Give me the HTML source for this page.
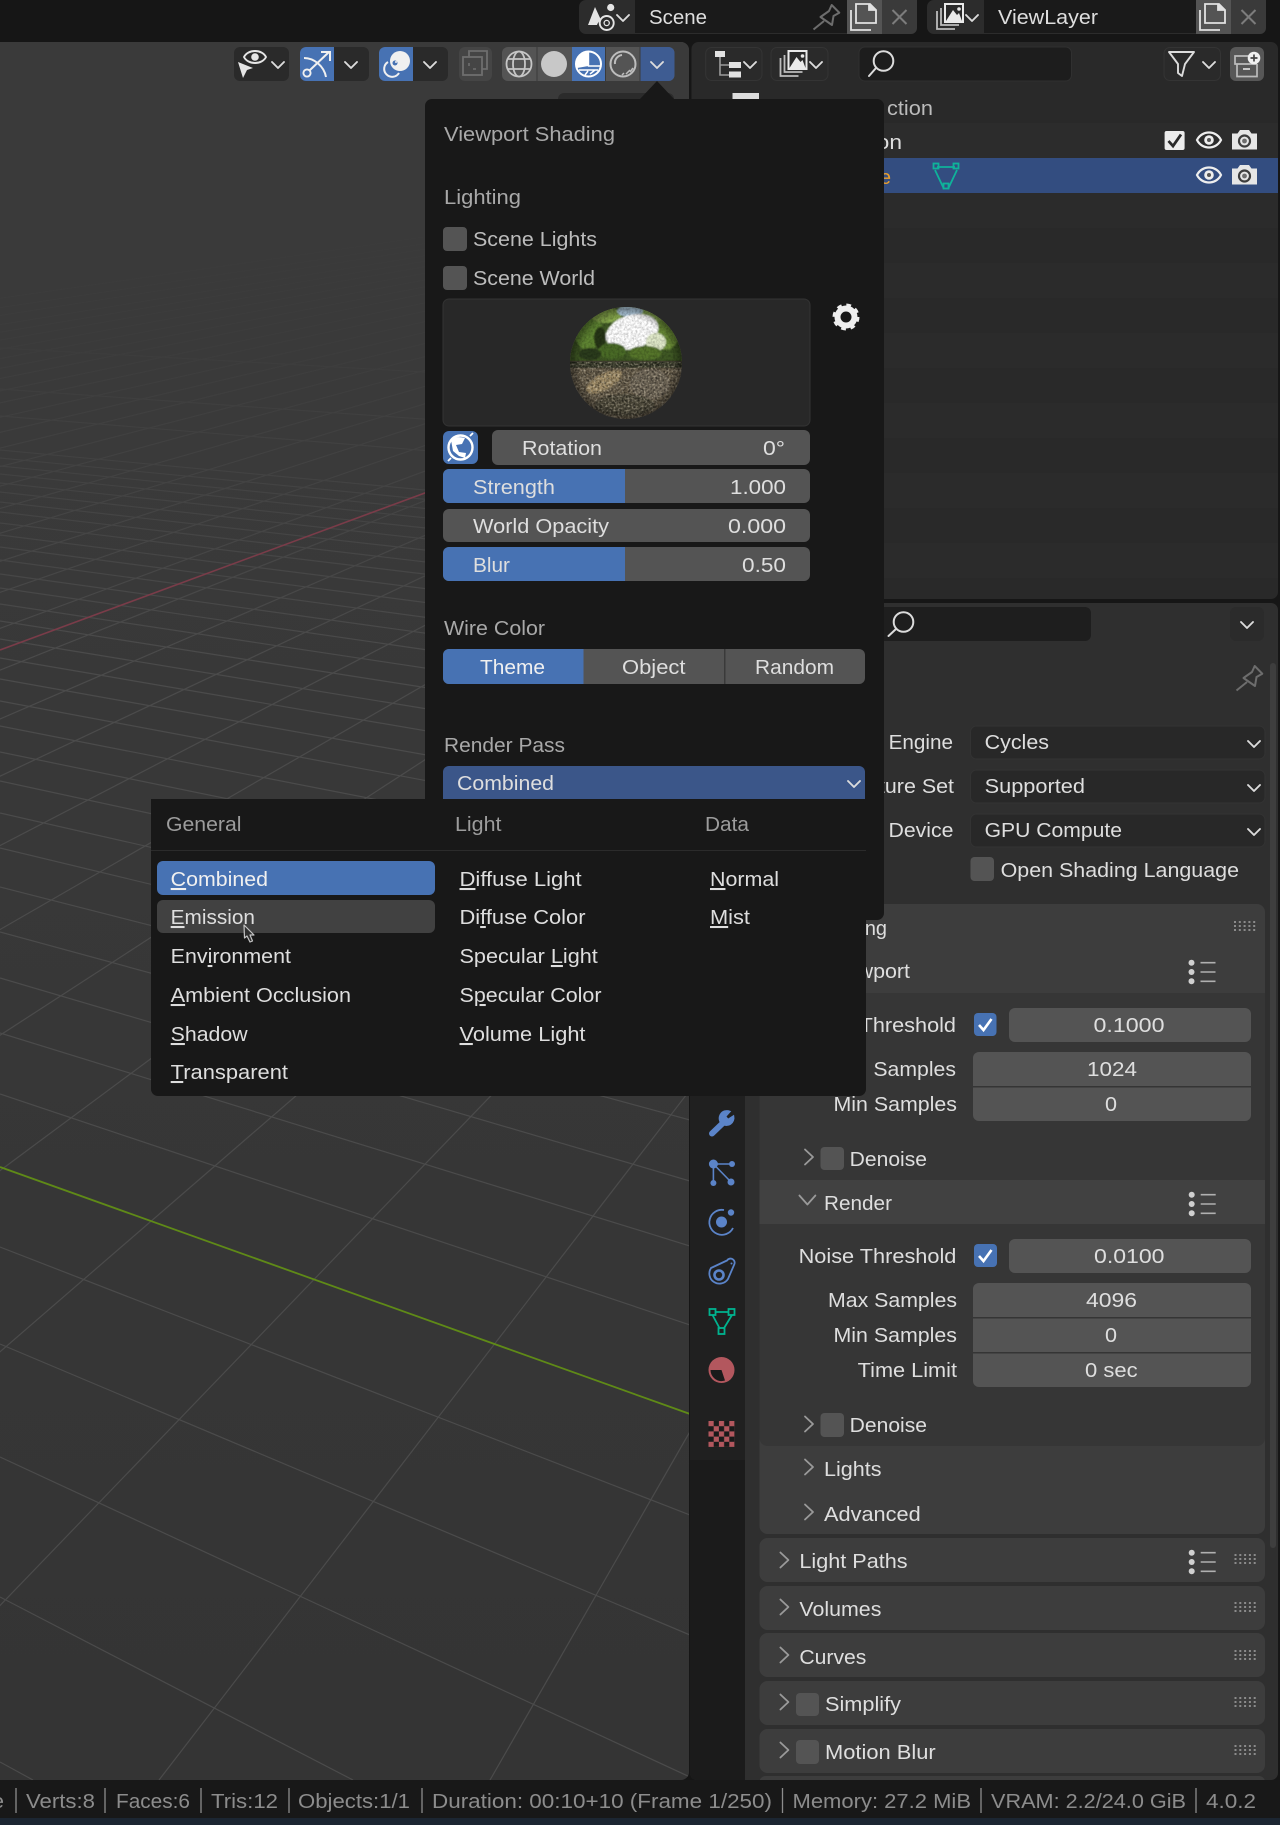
<!DOCTYPE html>
<html><head><meta charset="utf-8"><title>Blender</title>
<style>
html,body{margin:0;padding:0;background:#161616;width:1280px;height:1825px;overflow:hidden}
svg{display:block;filter:blur(.35px)}
text{font-family:"Liberation Sans",sans-serif;font-size:20.5px;fill:#dedede;white-space:pre}
.d{fill:#a8a8a8}.e{fill:#bcbcbc}.h{fill:#9c9c9c}.s{fill:#8c8c8c}.w{fill:#f0f0f0}
.u{text-decoration:underline}
</style></head><body>
<svg width="1280" height="1825" viewBox="0 0 1280 1825" xmlns="http://www.w3.org/2000/svg">
<defs>
<linearGradient id="vpbg" x1="0" y1="0" x2="0" y2="1"><stop offset="0" stop-color="#3b3b3b"/><stop offset="1" stop-color="#343434"/></linearGradient>
<linearGradient id="fade" gradientUnits="userSpaceOnUse" x1="0" y1="170" x2="0" y2="660"><stop offset="0" stop-color="#3a3a3a"/><stop offset=".35" stop-color="#3a3a3a" stop-opacity=".88"/><stop offset="1" stop-color="#3a3a3a" stop-opacity="0"/></linearGradient>
<clipPath id="vp"><rect x="-10" y="42" width="699" height="1738" rx="8"/></clipPath>
<clipPath id="ball"><circle cx="626" cy="363" r="56"/></clipPath>
<radialGradient id="rim" cx=".5" cy=".5" r=".5"><stop offset=".82" stop-color="#000" stop-opacity="0"/><stop offset="1" stop-color="#000" stop-opacity=".4"/></radialGradient>
<filter id="noise" x="0" y="0" width="1" height="1"><feTurbulence type="fractalNoise" baseFrequency=".45" numOctaves="2" seed="4"/><feColorMatrix values="0 0 0 0 0 0 0 0 0 0 0 0 0 0 0 2.4 0 0 0 -.9"/></filter>
<filter id="noisel" x="0" y="0" width="1" height="1"><feTurbulence type="fractalNoise" baseFrequency=".5" numOctaves="2" seed="11"/><feColorMatrix values="0 0 0 0 .8 0 0 0 0 .72 0 0 0 0 .55 2.6 0 0 0 -1.15"/></filter>
<filter id="sb" x="-20%" y="-20%" width="140%" height="140%"><feGaussianBlur stdDeviation=".9"/></filter>
<path id="chev" d="M-6 -3L0 3L6 -3" fill="none" stroke="#dcdcdc" stroke-width="1.9" stroke-linecap="round" stroke-linejoin="round"/>
<path id="cr" d="M-4 -7.5L4 0L-4 7.5" fill="none" stroke="#9a9a9a" stroke-width="1.8" stroke-linecap="round" stroke-linejoin="round"/>
<g id="list"><circle cx="0" cy="-9.3" r="3" fill="#d0d0d0"/><circle cx="0" cy="0" r="3" fill="#d0d0d0"/><circle cx="0" cy="9.3" r="3" fill="#d0d0d0"/><path d="M9 -9.3H24M9 0H24M9 9.3H24" stroke="#b0b0b0" stroke-width="1.6"/></g>
<g id="dots"><path d="M0 1H23M0 5H23M0 9H23" stroke="#969696" stroke-width="1.8" stroke-dasharray="2 2.8" fill="none"/></g>
<g id="eye"><path d="M-12 0C-7 -10 7 -10 12 0C7 10 -7 10 -12 0Z" fill="none" stroke="#eee" stroke-width="2.2"/><circle r="4.8" fill="#eee"/><circle r="2" fill="#555"/></g>
<g id="cam"><path d="M-12.5 -6.5H-7L-4.5 -10H4.5L7 -6.5H12.5V9.5H-12.5Z" fill="#e6e6e6"/><circle r="6.6" cy="1" fill="#3d3d3d"/><circle r="4.4" cy="1" fill="#e6e6e6"/><circle r="2.4" cy="1" fill="#6d6d6d"/></g>
<g id="copy" fill="none" stroke="#e2e2e2" stroke-width="1.8"><path d="M-13 -7V13H7"/><path d="M-8 -13H6L12 -7V6H-8Z" fill="#545454"/><path d="M5 -13V-7H12" fill="#e2e2e2"/></g>
<g id="stack"><path d="M-14 -6V12H4M-10 -9V8H8" fill="none" stroke="#bdbdbd" stroke-width="1.8"/><rect x="-6" y="-13" width="18" height="18" fill="#2a2a2a" stroke="#eaeaea" stroke-width="2"/><path d="M-5 4L2 -7L6 -2L8 -4L11 4Z" fill="#eaeaea"/><circle cx="8" cy="-8" r="1.8" fill="#eaeaea"/></g>
<g id="pin" fill="none" stroke="#6d6d6d" stroke-width="2" stroke-linejoin="round"><path d="M831.7 5L839.3 12.7L833.5 16L832 25L820.5 17L829 11Z"/><path d="M813.5 29.5L824 21"/></g>
<pattern id="chk" width="10.4" height="10.4" patternUnits="userSpaceOnUse" x="708.5" y="1421"><rect width="10.4" height="10.4" fill="#b3575e"/><rect x="5.2" width="5.2" height="5.2" fill="#1a1a1a"/><rect y="5.2" width="5.2" height="5.2" fill="#1a1a1a"/></pattern>
</defs>

<rect width="1280" height="1825" fill="#161616"/>

<!-- top bar widgets -->
<rect x="579" y="0" width="338" height="34" rx="7" fill="#2c2c2c"/>
<rect x="635" y="0" width="212" height="33" fill="#1a1a1a"/>
<rect x="847" y="0" width="35" height="34" fill="#545454"/>
<path d="M882 0H917V28a6 6 0 0 1-6 6H882Z" fill="#3a3a3a"/>
<path d="M588 25L595 7L601 20A9 9 0 0 0 597 25Z" fill="#e4e4e4"/><circle cx="606.7" cy="23" r="7" fill="#2c2c2c" stroke="#e4e4e4" stroke-width="1.9"/><circle cx="606.7" cy="23" r="2.6" fill="none" stroke="#e4e4e4" stroke-width="1.3"/><circle cx="610.7" cy="7.5" r="3.6" fill="#e4e4e4"/>
<use href="#chev" x="623" y="18"/>
<text x="649" y="24" textLength="58" lengthAdjust="spacingAndGlyphs">Scene</text>
<use href="#pin"/>
<use href="#copy" x="864" y="17"/>
<path d="M892.5 10L906.5 24M906.5 10L892.5 24" stroke="#7c7c7c" stroke-width="2"/>

<rect x="927" y="0" width="339" height="34" rx="7" fill="#2c2c2c"/>
<rect x="984" y="0" width="212" height="33" fill="#1a1a1a"/>
<rect x="1196" y="0" width="35" height="34" fill="#545454"/>
<path d="M1231 0H1266V28a6 6 0 0 1-6 6H1231Z" fill="#3a3a3a"/>
<use href="#stack" x="951" y="17"/>
<use href="#chev" x="972" y="18"/>
<text x="998" y="24" textLength="100" lengthAdjust="spacingAndGlyphs">ViewLayer</text>
<use href="#copy" x="1213" y="17"/>
<path d="M1241.5 10L1255.5 24M1255.5 10L1241.5 24" stroke="#7c7c7c" stroke-width="2"/>

<!-- viewport -->
<g clip-path="url(#vp)">
<rect x="-10" y="42" width="699" height="1738" fill="url(#vpbg)"/>
<g fill="none" stroke="#4b4b4b" stroke-width="1.2">
<path d="M0 1762L33 1780M0 1597L353 1780M0 1457L690 1777M0 1344L690 1635M0 1247L690 1515M0 1094L690 1325M0 1033L690 1246M0 978L690 1181M0 932L690 1120M0 887L690 1063M0 848L690 1014M0 813L690 970M0 781L690 930M0 752L690 894M0 726L690 861M0 701L690 830M0 679L690 802M0 658L690 776M0 639L690 752M0 621L690 729M0 604L690 708M0 588L690 688M0 574L690 670M0 560L690 653M0 547L690 637M0 535L690 622M0 523L690 606M0 512L690 593M0 502L690 580M0 492L690 568M0 483L690 556M0 474L690 545M0 466L690 535M0 458L690 525M0 450L690 515M0 416L690 472M0 389L690 438M0 348L690 387"/>
<path d="M490 1780L690 1431.5M159 1780L690 1090M-168 1780L690 889M-495 1780L690 755M-822 1780L690 659M-1149 1780L690 588M-1476 1780L690 532M-1803 1780L690 488M-2130 1780L690 451M-2457 1780L690 421M-2784 1780L690 395M-3111 1780L690 373M-3438 1780L690 354M-3765 1780L690 338M-4092 1780L690 323M-4419 1780L690 310M-4746 1780L690 298M-5073 1780L690 288M-5400 1780L690 278M-5727 1780L690 270M-6054 1780L690 262M-6381 1780L690 254M-6708 1780L690 248M-7035 1780L690 241M-7362 1780L690 236M-7689 1780L690 231M-8016 1780L690 226M-8343 1780L690 221M-8670 1780L690 217M-9000 1780L690 213M-9400 1780L690 208M-9800 1780L690 204M-10300 1780L690 199"/>
</g>
<rect x="0" y="42" width="690" height="620" fill="url(#fade)"/>
<path d="M0 650L690 395" stroke="#7a3c49" stroke-width="1.6" fill="none"/>
<path d="M0 1167L690 1414" stroke="#5f8a17" stroke-width="1.8" fill="none"/>
</g>

<!-- viewport header widgets -->
<rect x="234" y="47" width="55" height="34" rx="6" fill="#2a2a2a"/>
<path d="M238 62L253 68L247 70L243 78Z" fill="#e6e6e6"/>
<path d="M244 57C248 49 262 49 266 57C262 65 248 65 244 57Z" fill="none" stroke="#e6e6e6" stroke-width="1.9"/><circle cx="255" cy="57" r="3.8" fill="#e6e6e6"/>
<use href="#chev" x="278" y="65"/>
<rect x="300" y="47" width="69" height="34" rx="6" fill="#2a2a2a"/>
<rect x="300" y="47" width="34" height="34" rx="6" fill="#4772b3"/><rect x="320" y="47" width="14" height="34" fill="#4772b3"/>
<path d="M304 58C314 58 324 66 326 77" fill="none" stroke="#f0f0f0" stroke-width="2"/><path d="M310 70L329 52M321 52H330V61" fill="none" stroke="#f0f0f0" stroke-width="2"/><circle cx="307" cy="73" r="3.6" fill="#4772b3" stroke="#f0f0f0" stroke-width="1.9"/>
<use href="#chev" x="351" y="65"/>
<rect x="379" y="47" width="69" height="34" rx="6" fill="#2a2a2a"/>
<rect x="379" y="47" width="34" height="34" rx="6" fill="#4772b3"/><rect x="399" y="47" width="14" height="34" fill="#4772b3"/>
<path d="M388 62A8 8 0 1 0 399 73" fill="none" stroke="#f0f0f0" stroke-width="2"/><circle cx="400" cy="61" r="10" fill="#f0f0f0"/><circle cx="395" cy="63" r="2.5" fill="#4772b3"/><circle cx="396" cy="62" r="1" fill="#f0f0f0"/>
<use href="#chev" x="430" y="65"/>
<rect x="459" y="47" width="33" height="34" rx="6" fill="#454545"/>
<path d="M469 57V51H487V69H482" fill="none" stroke="#6e6e6e" stroke-width="1.8"/><rect x="463" y="57" width="19" height="18" fill="none" stroke="#6e6e6e" stroke-width="1.8"/><path d="M469 63V66M476 69H473" stroke="#6e6e6e" stroke-width="1.6"/>

<rect x="502" y="47" width="172.5" height="34" rx="6" fill="#545454"/>
<rect x="572" y="47" width="33.5" height="34" fill="#4772b3"/>
<path d="M640 47H668.5a6 6 0 0 1 6 6V75a6 6 0 0 1-6 6H640Z" fill="#3e5c92"/>
<path d="M537 47V81M605.5 47V81M640 47V81" stroke="#3a3a3a" stroke-width="1"/>
<g fill="none" stroke="#c6c6c6" stroke-width="1.8"><circle cx="519" cy="64" r="12.5"/><ellipse cx="519" cy="64" rx="6" ry="12.5"/><path d="M507 59H531M507 69H531"/></g>
<circle cx="554" cy="64" r="13" fill="#c8c8c8"/>
<circle cx="588.5" cy="64" r="12.5" fill="none" stroke="#fff" stroke-width="2"/><path d="M588.5 52A12 12 0 0 0 577 68L588.5 66Z" fill="#fff"/><path d="M579 70L598 70M590 74L595 70M585 75L588 71" stroke="#fff" stroke-width="1.5"/>
<path d="M588.5 52V66L600.5 66" stroke="#fff" stroke-width="1.4" fill="none"/>
<circle cx="623" cy="64" r="12.5" fill="none" stroke="#bdbdbd" stroke-width="2"/><path d="M615 64A8 8 0 0 1 622 55" fill="none" stroke="#bdbdbd" stroke-width="2"/><path d="M626 74L630 70M622 75L624 73M630 72L633 68" stroke="#bdbdbd" stroke-width="1.5"/>
<use href="#chev" x="657" y="65"/>
<rect x="558" y="93" width="116" height="30" rx="6" fill="#2b2b2b"/>

<!-- outliner -->
<rect x="691.5" y="42" width="586.5" height="557" rx="7" fill="#292929"/>
<rect x="692" y="123" width="586" height="35" fill="#2c2c2c"/>
<rect x="692" y="193" width="586" height="35" fill="#2b2b2b"/>
<rect x="692" y="263" width="586" height="35" fill="#2b2b2b"/>
<rect x="692" y="333" width="586" height="35" fill="#2b2b2b"/>
<rect x="692" y="403" width="586" height="35" fill="#2b2b2b"/>
<rect x="692" y="473" width="586" height="35" fill="#2b2b2b"/>
<rect x="692" y="543" width="586" height="35" fill="#2b2b2b"/>
<rect x="692" y="158" width="586" height="35" fill="#334d80"/>
<rect x="732.5" y="93" width="26.5" height="10" fill="#dcdcdc"/>
<rect x="705.7" y="47.5" width="56.3" height="33" rx="6" fill="#2a2a2a" stroke="#343434"/>
<rect x="715" y="51" width="10" height="6" fill="#e2e2e2"/><path d="M720 57V75H729M720 65H729" fill="none" stroke="#9a9a9a" stroke-width="1.6"/><rect x="729" y="62" width="12" height="6" fill="#e2e2e2"/><rect x="729" y="71.5" width="12" height="6" fill="#e2e2e2"/>
<use href="#chev" x="750" y="65"/>
<rect x="771" y="47.5" width="57" height="33" rx="6" fill="#2a2a2a" stroke="#343434"/>
<use href="#stack" x="794.5" y="64"/>
<use href="#chev" x="816" y="65"/>
<rect x="859" y="47" width="212.5" height="34" rx="6" fill="#1d1d1d" stroke="#303030"/>
<circle cx="883.5" cy="61" r="9.8" fill="none" stroke="#dcdcdc" stroke-width="2"/><path d="M876 68L869 76" stroke="#dcdcdc" stroke-width="2" stroke-linecap="round"/>
<rect x="1164" y="47.5" width="56.5" height="33" rx="6" fill="#2a2a2a" stroke="#343434"/>
<path d="M1169 52H1194L1185 64L1182 76L1178 73L1178 64Z" fill="none" stroke="#dcdcdc" stroke-width="1.9" stroke-linejoin="round"/>
<use href="#chev" x="1209" y="65"/>
<rect x="1230" y="47" width="34" height="34" rx="6" fill="#575757"/>
<path d="M1249 56H1235V64H1257M1237 64V76.5H1257V64" fill="none" stroke="#bcbcbc" stroke-width="1.7"/><rect x="1243" y="68" width="7" height="2" fill="#c8c8c8"/>
<circle cx="1254" cy="58" r="6.3" fill="#f0f0f0"/><path d="M1250.5 58H1257.5M1254 54.5V61.5" stroke="#444" stroke-width="1.7"/>
<text x="887" y="115" textLength="46" lengthAdjust="spacingAndGlyphs" class="e">ction</text>
<text x="802" y="149" textLength="100" lengthAdjust="spacingAndGlyphs">Collection</text>
<text x="843" y="184" textLength="48" lengthAdjust="spacingAndGlyphs" style="fill:#e89d2c">Cube</text>
<rect x="1164.6" y="131" width="20" height="19" rx="2" fill="#ececec"/><path d="M1168.5 141L1173 146L1181 134.5" fill="none" stroke="#282828" stroke-width="2.8"/>
<use href="#eye" x="1209" y="140"/><use href="#cam" x="1244.5" y="140"/>
<use href="#eye" x="1209" y="175"/><use href="#cam" x="1244.5" y="175"/>
<g fill="none" stroke="#0fb39a" stroke-width="1.8"><path d="M937 167L955 167M935 170L944 189M957 170L948 189"/><rect x="933.5" y="163.5" width="5" height="5"/><rect x="953.5" y="163.5" width="5" height="5"/><rect x="943.5" y="183.5" width="5" height="5"/></g>

<!-- properties -->
<rect x="690" y="603" width="588" height="1177" rx="7" fill="#2f2f2f"/>
<path d="M690 650H745V1780H697a7 7 0 0 1-7-7Z" fill="#1b1b1b"/>
<rect x="690" y="650" width="55" height="810" fill="#202020"/>
<rect x="840" y="607" width="251" height="34" rx="6" fill="#1e1e1e"/>
<circle cx="903.5" cy="622" r="9.8" fill="none" stroke="#dcdcdc" stroke-width="2"/><path d="M896 629L888.5 636" stroke="#dcdcdc" stroke-width="2" stroke-linecap="round"/>
<rect x="1230" y="607" width="34" height="34" rx="6" fill="#2b2b2b"/><use href="#chev" x="1247" y="625"/>
<use href="#pin" transform="translate(423 661)"/>

<text x="815" y="749" textLength="138" lengthAdjust="spacingAndGlyphs">Render Engine</text>
<text x="842" y="793" textLength="112" lengthAdjust="spacingAndGlyphs">Feature Set</text>
<text x="888.5" y="837" textLength="65" lengthAdjust="spacingAndGlyphs">Device</text>
<rect x="970.5" y="726" width="294.5" height="33" rx="6" fill="#282828" stroke="#333"/>
<rect x="970.5" y="770" width="294.5" height="33" rx="6" fill="#282828" stroke="#333"/>
<rect x="970.5" y="814" width="294.5" height="33" rx="6" fill="#282828" stroke="#333"/>
<text x="984.6" y="749" textLength="64.4" lengthAdjust="spacingAndGlyphs">Cycles</text>
<text x="984.6" y="793" textLength="100.4" lengthAdjust="spacingAndGlyphs">Supported</text>
<text x="984.6" y="837" textLength="137.4" lengthAdjust="spacingAndGlyphs">GPU Compute</text>
<use href="#chev" x="1254" y="744"/><use href="#chev" x="1254" y="788"/><use href="#chev" x="1254" y="832"/>
<rect x="970.5" y="857" width="23.5" height="24" rx="4" fill="#545454"/>
<text x="1000.6" y="877" textLength="238.4" lengthAdjust="spacingAndGlyphs">Open Shading Language</text>

<!-- Sampling panel -->
<rect x="759.5" y="904" width="505.5" height="630" rx="8" fill="#3d3d3d"/>
<rect x="759.5" y="993" width="505.5" height="187" fill="#363636"/>
<rect x="759.5" y="1180" width="505.5" height="44" fill="#414141"/>
<rect x="759.5" y="1224" width="505.5" height="214" fill="#363636"/>
<path d="M759.5 1438H1265V1438a8 8 0 0 1-8 8H767.5a8 8 0 0 1-8-8Z" fill="#363636"/>
<text x="804" y="935" textLength="83" lengthAdjust="spacingAndGlyphs">Sampling</text>
<use href="#dots" x="1234" y="921"/>
<text x="827" y="978" textLength="83" lengthAdjust="spacingAndGlyphs">Viewport</text>
<use href="#list" x="1191.5" y="972"/>
<text x="798.6" y="1032" textLength="157.4" lengthAdjust="spacingAndGlyphs">Noise Threshold</text>
<rect x="974" y="1013" width="22.5" height="23" rx="4" fill="#4772b3"/><path d="M979 1025L983.5 1030L991.5 1019" fill="none" stroke="#fff" stroke-width="2.6"/>
<rect x="1009" y="1008" width="242" height="34" rx="6" fill="#545454"/>
<text x="1093.5" y="1032" textLength="71" lengthAdjust="spacingAndGlyphs">0.1000</text>
<rect x="973" y="1052" width="278" height="69" rx="6" fill="#545454"/><rect x="973" y="1086" width="278" height="1.5" fill="#353535"/>
<text x="873.4" y="1076" textLength="82.6" lengthAdjust="spacingAndGlyphs">Samples</text>
<text x="1087" y="1076" textLength="50" lengthAdjust="spacingAndGlyphs">1024</text>
<text x="833.5" y="1111" textLength="123.5" lengthAdjust="spacingAndGlyphs">Min Samples</text>
<text x="1105" y="1111" textLength="12" lengthAdjust="spacingAndGlyphs">0</text>
<use href="#cr" x="809" y="1157"/>
<rect x="820.5" y="1147" width="23.5" height="23" rx="4" fill="#545454"/>
<text x="849.7" y="1166" textLength="77.3" lengthAdjust="spacingAndGlyphs">Denoise</text>

<path d="M799.4 1195.5L807.4 1204.5L815.4 1195.5" fill="none" stroke="#9a9a9a" stroke-width="1.8" stroke-linecap="round" stroke-linejoin="round"/>
<text x="824" y="1210" textLength="68" lengthAdjust="spacingAndGlyphs">Render</text>
<use href="#list" x="1191.7" y="1204"/>
<text x="798.6" y="1263" textLength="157.8" lengthAdjust="spacingAndGlyphs">Noise Threshold</text>
<rect x="974" y="1244" width="23" height="23" rx="4" fill="#4772b3"/><path d="M979 1256L983.5 1261L991.5 1250" fill="none" stroke="#fff" stroke-width="2.6"/>
<rect x="1009" y="1239" width="242" height="34" rx="6" fill="#545454"/>
<text x="1094" y="1263" textLength="70.5" lengthAdjust="spacingAndGlyphs">0.0100</text>
<rect x="973" y="1283" width="278" height="104" rx="6" fill="#545454"/><rect x="973" y="1317" width="278" height="1.5" fill="#353535"/><rect x="973" y="1352" width="278" height="1.5" fill="#353535"/>
<text x="828" y="1307" textLength="129" lengthAdjust="spacingAndGlyphs">Max Samples</text>
<text x="1086" y="1307" textLength="51" lengthAdjust="spacingAndGlyphs">4096</text>
<text x="833.5" y="1342" textLength="123.5" lengthAdjust="spacingAndGlyphs">Min Samples</text>
<text x="1105" y="1342" textLength="12" lengthAdjust="spacingAndGlyphs">0</text>
<text x="857.7" y="1377" textLength="99.3" lengthAdjust="spacingAndGlyphs">Time Limit</text>
<text x="1085" y="1377" textLength="52.6" lengthAdjust="spacingAndGlyphs">0 sec</text>
<use href="#cr" x="809" y="1424"/>
<rect x="820.5" y="1413" width="23.5" height="24" rx="4" fill="#545454"/>
<text x="849.7" y="1432" textLength="77.3" lengthAdjust="spacingAndGlyphs">Denoise</text>
<use href="#cr" x="809" y="1467"/>
<text x="824" y="1476" textLength="57.5" lengthAdjust="spacingAndGlyphs">Lights</text>
<use href="#cr" x="809" y="1512"/>
<text x="824" y="1521" textLength="96.7" lengthAdjust="spacingAndGlyphs">Advanced</text>

<!-- closed panels -->
<rect x="759.5" y="1538" width="505.5" height="44" rx="8" fill="#3d3d3d"/>
<use href="#cr" x="784.4" y="1560"/>
<text x="799.4" y="1568" textLength="108.2" lengthAdjust="spacingAndGlyphs">Light Paths</text>
<use href="#list" x="1191.7" y="1562"/><use href="#dots" x="1234.5" y="1554"/>
<rect x="759.5" y="1586" width="505.5" height="44" rx="8" fill="#3d3d3d"/>
<use href="#cr" x="784.4" y="1607"/>
<text x="799.4" y="1616" textLength="82" lengthAdjust="spacingAndGlyphs">Volumes</text>
<use href="#dots" x="1234.5" y="1602"/>
<rect x="759.5" y="1633" width="505.5" height="44" rx="8" fill="#3d3d3d"/>
<use href="#cr" x="784.4" y="1655"/>
<text x="799.4" y="1664" textLength="67" lengthAdjust="spacingAndGlyphs">Curves</text>
<use href="#dots" x="1234.5" y="1650"/>
<rect x="759.5" y="1681" width="505.5" height="44" rx="8" fill="#3d3d3d"/>
<use href="#cr" x="784.4" y="1702"/>
<rect x="796" y="1693" width="23" height="23" rx="4" fill="#545454"/>
<text x="825" y="1711" textLength="76" lengthAdjust="spacingAndGlyphs">Simplify</text>
<use href="#dots" x="1234.5" y="1697"/>
<rect x="759.5" y="1729" width="505.5" height="44" rx="8" fill="#3d3d3d"/>
<use href="#cr" x="784.4" y="1750"/>
<rect x="796" y="1740" width="23" height="24" rx="4" fill="#545454"/>
<text x="825" y="1759" textLength="110.7" lengthAdjust="spacingAndGlyphs">Motion Blur</text>
<use href="#dots" x="1234.5" y="1745"/>
<path d="M759.5 1784v-2a6 6 0 0 1 6-6H1259a6 6 0 0 1 6 6v2Z" fill="#3d3d3d"/>
<!-- scrollbar -->
<rect x="1270" y="663" width="6" height="885" rx="3" fill="#3e3e3e"/>

<!-- nav icons -->
<g fill="none" stroke="#5b84c9">
<path d="M712 1133.5L724 1122" stroke-width="6" stroke-linecap="round"/>
<path d="M733.5 1116A7.5 7.5 0 0 1 722 1124A7.5 7.5 0 0 1 730 1111.5L725.5 1116.5L728 1119.5Z" fill="#5b84c9" stroke-width="1.5"/>
<path d="M713.4 1164L713.4 1183M713.4 1164H732M713.4 1164L731 1182" stroke-width="1.6"/>
<circle cx="713.4" cy="1164" r="4.5" fill="#5b84c9" stroke="none"/><circle cx="732" cy="1164" r="3" fill="#5b84c9" stroke="none"/><circle cx="713.4" cy="1183" r="3" fill="#5b84c9" stroke="none"/><circle cx="731" cy="1182" r="3.5" fill="#5b84c9" stroke="none"/>
<circle cx="721.5" cy="1222" r="5.5" fill="#5b84c9" stroke="none"/><circle cx="731" cy="1212.5" r="3.2" fill="#5b84c9" stroke="none"/>
<path d="M724 1210A12.5 12.5 0 1 0 733 1228" stroke-width="1.8"/>
<path d="M711 1268L727 1260.5A4 4 0 0 1 734 1265L728 1279A10 10 0 1 1 711 1268Z" stroke-width="1.8"/>
<circle cx="719" cy="1275" r="4.5" stroke-width="2.6"/><circle cx="731.5" cy="1263.5" r="1" fill="#5b84c9" stroke="none"/>
</g>
<g fill="none" stroke="#00b38f" stroke-width="1.8"><path d="M715.5 1312H729M712.5 1315L720 1329M732 1315L723.5 1329"/><rect x="709.5" y="1309" width="6" height="6"/><rect x="728.5" y="1309" width="6" height="6"/><rect x="718.5" y="1328" width="6" height="6"/></g>
<circle cx="721.5" cy="1370" r="13" fill="#b3575e"/><path d="M721.5 1370H710.5A11 11 0 0 0 725 1380.5Z" fill="#1a1a1a"/>
<rect x="708.5" y="1421" width="26" height="26" fill="url(#chk)"/>

<!-- Viewport Shading popover -->
<polygon points="640,99 657,81 674,99" fill="#181818"/>
<rect x="425" y="99" width="459" height="821" rx="7" fill="#181818"/>
<text x="444" y="141" textLength="171" lengthAdjust="spacingAndGlyphs" class="d">Viewport Shading</text>
<text x="444" y="204" textLength="77" lengthAdjust="spacingAndGlyphs" class="d">Lighting</text>
<rect x="443" y="227" width="24" height="24" rx="4" fill="#545454"/>
<text x="473" y="246" textLength="124" lengthAdjust="spacingAndGlyphs" class="e">Scene Lights</text>
<rect x="443" y="266" width="24" height="24" rx="4" fill="#545454"/>
<text x="473" y="285" textLength="122" lengthAdjust="spacingAndGlyphs" class="e">Scene World</text>
<rect x="443" y="299" width="367" height="127" rx="6" fill="#282828" stroke="#333"/>
<g clip-path="url(#ball)">
<rect x="566" y="303" width="120" height="120" fill="#645a48"/>
<rect x="566" y="303" width="120" height="58" fill="#3f5824"/>
<g filter="url(#sb)">
<ellipse cx="588" cy="330" rx="14" ry="20" fill="#5f8530"/>
<ellipse cx="666" cy="330" rx="14" ry="20" fill="#6e9138"/>
<ellipse cx="606" cy="315" rx="16" ry="8" fill="#86a74c"/>
<ellipse cx="652" cy="314" rx="14" ry="8" fill="#8eae54"/>
<ellipse cx="630" cy="311" rx="13" ry="6" fill="#b5d0e4"/>
<ellipse cx="632" cy="332" rx="27" ry="17" fill="#fff" transform="rotate(-16 632 332)"/>
<ellipse cx="656" cy="342" rx="10" ry="9" fill="#dfe8c8"/>
<ellipse cx="600" cy="338" rx="6" ry="11" fill="#263417"/>
<ellipse cx="612" cy="351" rx="14" ry="8" fill="#4a6a26"/>
<ellipse cx="645" cy="353" rx="17" ry="7" fill="#55752c"/>
<ellipse cx="590" cy="354" rx="11" ry="6" fill="#2b3a1a"/>
<rect x="566" y="361" width="120" height="7" fill="#383a2c"/>
<ellipse cx="604" cy="382" rx="20" ry="8" fill="#a08c66" transform="rotate(-28 604 382)"/>
<ellipse cx="650" cy="384" rx="20" ry="15" fill="#6e6556"/>
<ellipse cx="625" cy="405" rx="30" ry="11" fill="#4c4638"/>
</g>
<rect x="566" y="362" width="120" height="61" filter="url(#noise)" opacity=".55"/>
<rect x="566" y="362" width="120" height="61" filter="url(#noisel)" opacity=".5"/>
<rect x="566" y="303" width="120" height="60" filter="url(#noise)" opacity=".22"/>
<circle cx="626" cy="363" r="56" fill="url(#rim)"/>
</g>
<!-- gear -->
<circle cx="846" cy="317" r="8.5" fill="none" stroke="#eee" stroke-width="6"/>
<circle cx="846" cy="317" r="11.5" fill="none" stroke="#eee" stroke-width="4" stroke-dasharray="4.5 4.53"/>
<!-- world btn -->
<rect x="443" y="431" width="35" height="33" rx="6" fill="#4772b3"/>
<circle cx="460.5" cy="447.5" r="12" fill="none" stroke="#fff" stroke-width="2.4"/>
<path d="M451 440C455 436 461 437 465 438L462 444L456 445L459 452L466 453L465 458L459 456L453 451Z" fill="#fff"/>
<path d="M448 461L451 458M470 436L473 433" stroke="#fff" stroke-width="1.8"/>
<rect x="492" y="430" width="318" height="35" rx="6" fill="#545454"/>
<text x="522" y="455" textLength="80" lengthAdjust="spacingAndGlyphs">Rotation</text>
<text x="763" y="455" textLength="22" lengthAdjust="spacingAndGlyphs">0°</text>
<rect x="443" y="469" width="367" height="34" rx="6" fill="#545454"/>
<path d="M625 469H449a6 6 0 0 0-6 6V497a6 6 0 0 0 6 6H625Z" fill="#4772b3"/>
<text x="473" y="494" textLength="82" lengthAdjust="spacingAndGlyphs">Strength</text>
<text x="730" y="494" textLength="56" lengthAdjust="spacingAndGlyphs">1.000</text>
<rect x="443" y="509" width="367" height="33" rx="6" fill="#545454"/>
<text x="473" y="533" textLength="136" lengthAdjust="spacingAndGlyphs">World Opacity</text>
<text x="728" y="533" textLength="58" lengthAdjust="spacingAndGlyphs">0.000</text>
<rect x="443" y="547" width="367" height="34" rx="6" fill="#545454"/>
<path d="M625 547H449a6 6 0 0 0-6 6V575a6 6 0 0 0 6 6H625Z" fill="#4772b3"/>
<text x="473" y="572" textLength="37" lengthAdjust="spacingAndGlyphs">Blur</text>
<text x="742" y="572" textLength="44" lengthAdjust="spacingAndGlyphs">0.50</text>
<text x="444" y="635" textLength="101" lengthAdjust="spacingAndGlyphs" class="d">Wire Color</text>
<rect x="443" y="649" width="422" height="35" rx="6" fill="#545454"/>
<path d="M583.5 649H449a6 6 0 0 0-6 6V678a6 6 0 0 0 6 6H583.5Z" fill="#4772b3"/>
<rect x="724" y="649" width="1.5" height="35" fill="#3a3a3a"/>
<text x="480" y="674" textLength="65" lengthAdjust="spacingAndGlyphs" class="w">Theme</text>
<text x="622" y="674" textLength="63.5" lengthAdjust="spacingAndGlyphs">Object</text>
<text x="755" y="674" textLength="79" lengthAdjust="spacingAndGlyphs">Random</text>
<text x="444" y="752" textLength="121" lengthAdjust="spacingAndGlyphs" class="d">Render Pass</text>
<path d="M443 800V772a6 6 0 0 1 6-6H859a6 6 0 0 1 6 6V800Z" fill="#3b5689"/>
<text x="457" y="790" textLength="97" lengthAdjust="spacingAndGlyphs">Combined</text>
<use href="#chev" x="854" y="784"/>

<!-- enum menu -->
<path d="M151 799H866V1089a7 7 0 0 1-7 7H158a7 7 0 0 1-7-7Z" fill="#181818"/>
<text x="166" y="831" textLength="75.5" lengthAdjust="spacingAndGlyphs" class="h">General</text>
<text x="455" y="831" textLength="46.5" lengthAdjust="spacingAndGlyphs" class="h">Light</text>
<text x="705" y="831" textLength="44" lengthAdjust="spacingAndGlyphs" class="h">Data</text>
<rect x="151" y="850" width="715" height="1" fill="#2b2b2b"/>
<rect x="157" y="861" width="278" height="34" rx="6" fill="#4772b3"/>
<rect x="157" y="900" width="278" height="33" rx="6" fill="#414141"/>
<text x="170.7" y="886" textLength="97.3" lengthAdjust="spacingAndGlyphs" class="w"><tspan class="u">C</tspan>ombined</text>
<text x="170.7" y="924" textLength="84.3" lengthAdjust="spacingAndGlyphs"><tspan class="u">E</tspan>mission</text>
<text x="170.7" y="963" textLength="120.3" lengthAdjust="spacingAndGlyphs">Env<tspan class="u">i</tspan>ronment</text>
<text x="170.7" y="1002" textLength="180.3" lengthAdjust="spacingAndGlyphs"><tspan class="u">A</tspan>mbient Occlusion</text>
<text x="170.7" y="1041" textLength="76.9" lengthAdjust="spacingAndGlyphs"><tspan class="u">S</tspan>hadow</text>
<text x="170.7" y="1079" textLength="117.3" lengthAdjust="spacingAndGlyphs"><tspan class="u">T</tspan>ransparent</text>
<text x="459.5" y="886" textLength="122.2" lengthAdjust="spacingAndGlyphs"><tspan class="u">D</tspan>iffuse Light</text>
<text x="459.5" y="924" textLength="126" lengthAdjust="spacingAndGlyphs">Di<tspan class="u">f</tspan>fuse Color</text>
<text x="459.5" y="963" textLength="138.3" lengthAdjust="spacingAndGlyphs">Specular <tspan class="u">L</tspan>ight</text>
<text x="459.5" y="1002" textLength="142" lengthAdjust="spacingAndGlyphs">S<tspan class="u">p</tspan>ecular Color</text>
<text x="459.5" y="1041" textLength="126" lengthAdjust="spacingAndGlyphs"><tspan class="u">V</tspan>olume Light</text>
<text x="710" y="886" textLength="69" lengthAdjust="spacingAndGlyphs"><tspan class="u">N</tspan>ormal</text>
<text x="710" y="924" textLength="40" lengthAdjust="spacingAndGlyphs"><tspan class="u">M</tspan>ist</text>
<path d="M244 925L244.5 938L247 936L250 942L252.5 941L250 935L254 935Z" fill="#2e2e2e" stroke="#c4c4c4" stroke-width="1.2" stroke-linejoin="round"/>

<!-- status bar -->
<rect x="0" y="1780" width="1280" height="38" fill="#181818"/>
<rect x="0" y="1818" width="1280" height="7" fill="#1c2632"/>
<g>
<text x="-8" y="1808" textLength="12" lengthAdjust="spacingAndGlyphs" class="s">e</text>
<text x="26" y="1808" textLength="69" lengthAdjust="spacingAndGlyphs" class="s">Verts:8</text>
<text x="116" y="1808" textLength="74" lengthAdjust="spacingAndGlyphs" class="s">Faces:6</text>
<text x="211" y="1808" textLength="67" lengthAdjust="spacingAndGlyphs" class="s">Tris:12</text>
<text x="298" y="1808" textLength="112" lengthAdjust="spacingAndGlyphs" class="s">Objects:1/1</text>
<text x="432" y="1808" textLength="340" lengthAdjust="spacingAndGlyphs" class="s">Duration: 00:10+10 (Frame 1/250)</text>
<text x="792.5" y="1808" textLength="178.5" lengthAdjust="spacingAndGlyphs" class="s">Memory: 27.2 MiB</text>
<text x="991" y="1808" textLength="195" lengthAdjust="spacingAndGlyphs" class="s">VRAM: 2.2/24.0 GiB</text>
<text x="1206" y="1808" textLength="50" lengthAdjust="spacingAndGlyphs" class="s">4.0.2</text>
</g>
<path d="M16 1788V1813M105 1788V1813M201 1788V1813M289 1788V1813M422 1788V1813M782.5 1788V1813M981 1788V1813M1196 1788V1813" stroke="#8c8c8c" stroke-width="1.3"/>
</svg>
</body></html>
